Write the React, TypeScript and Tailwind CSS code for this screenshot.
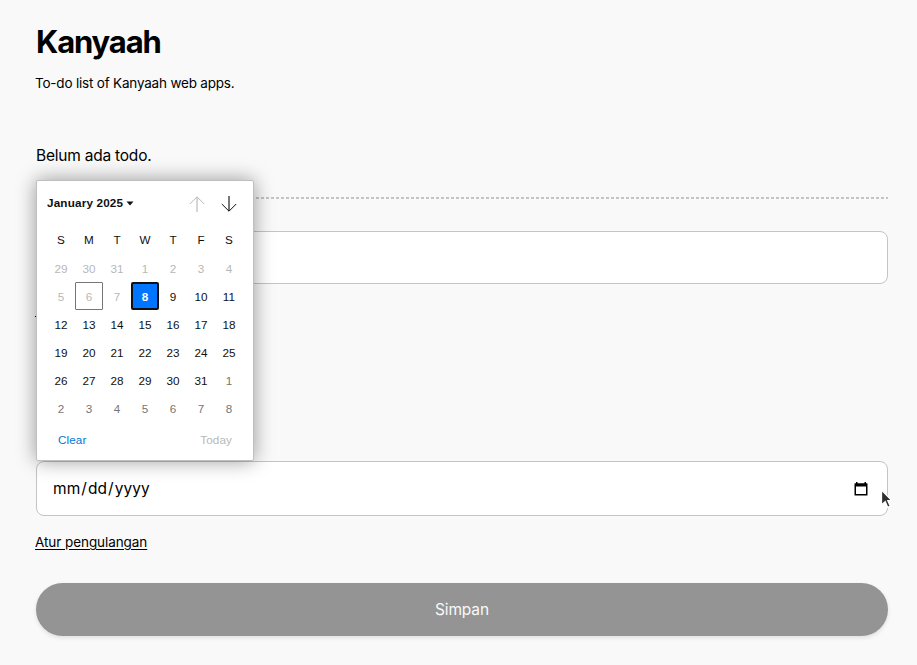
const WEEKDAYS = ["S", "M", "T", "W", "T", "F", "S"];
const DAYS = [
  29, 30, 31, 1, 2, 3, 4, 5, 6, 7, 8, 9, 10, 11, 12, 13, 14, 15, 16, 17, 18, 19, 20, 21, 22, 23, 24,
  25, 26, 27, 28, 29, 30, 31, 1, 2, 3, 4, 5, 6, 7, 8,
];

function dayClass(index: number) {
  if (index === 8) return "border border-[#767676] rounded-[1px] text-[#b8b8b8]";
  if (index === 10) return "border-2 border-[#101010] rounded-[2px] bg-[#0075ff] text-white font-bold";
  if (index < 10) return "text-[#b8b8b8]";
  if (index > 33) return "text-[#767676]";
  return "text-[#101010]";
}

function DatePicker() {
  return (
    <div className="absolute left-9 top-[180px] flex h-[281px] w-[218px] flex-col rounded-[2px] border border-[#bfbfbf] bg-white font-['Liberation_Sans',Arial,sans-serif] text-[11.7px] tracking-[0.1px] text-[#101010] shadow-[0_0_20px_rgba(0,0,0,0.4)]">
      <div className="flex h-[45px] items-center pl-[10px] pr-4">
        <span className="-mt-[2px] text-[11.7px] font-bold tracking-[0.18px]">January 2025</span>
        <svg className="-mt-px ml-[3px]" width="8" height="5" viewBox="0 0 8 5">
          <path d="M.5.5h7L4 4.5z" fill="#101010" />
        </svg>
        <div className="ml-auto flex gap-4">
          <svg width="16" height="16" viewBox="0 0 16 16" fill="none">
            <path d="M8 16V1" stroke="#d6d6d6" strokeWidth="2" />
            <path d="M.8 8 8 .8 15.200 8" stroke="#b8b8b8" />
          </svg>
          <svg width="16" height="16" viewBox="0 0 16 16" fill="none">
            <path d="M8 0V15" stroke="#777777" strokeWidth="2" />
            <path d="M.8 8 8 15.200 15.200 8" stroke="#101010" />
          </svg>
        </div>
      </div>
      <div className="grid grid-cols-[repeat(7,28px)] pl-[10px]">
        {WEEKDAYS.map((day, i) => (
          <div key={i} className="flex h-7 items-center justify-center pb-px">
            {day}
          </div>
        ))}
      </div>
      <div className="grid grid-cols-[repeat(7,28px)] pl-[10px]">
        {DAYS.map((day, i) => (
          <div key={i} className={`flex h-7 items-center justify-center ${dayClass(i)}`}>
            <span className="pt-[2px]">{day}</span>
          </div>
        ))}
      </div>
      <div className="flex h-[35px] items-center justify-between pl-[21px] pr-[21px] pt-px">
        <span className="text-[#0078d4]">Clear</span>
        <span className="text-[#b8b8b8]">Today</span>
      </div>
    </div>
  );
}

export default function App() {
  return (
    <main className="relative h-[665px] overflow-hidden bg-[#f9f9f9] pl-9 pr-[29px] font-['Inter',sans-serif] text-black">
      <h1 className="pt-[22px] text-[31px] font-bold leading-10">
        <span className="tracking-[-1.15px]">Kanyaah</span>
      </h1>
      <p className="-ml-px mt-[11px] text-[13.5px] leading-5 tracking-[-0.2px]">To-do list of Kanyaah web apps.</p>
      <p className="mt-[51px] text-[15.5px] leading-6 tracking-[-0.22px]">Belum ada todo.</p>
      <div className="mt-[29px] h-[2px] bg-[repeating-linear-gradient(to_right,#c4c4c4_0_3px,transparent_3px_5px)]" />
      <div className="mt-8 h-[53px] rounded-lg border border-[#c4c4c4] bg-white" />
      <div className="-ml-px mt-8 h-px w-8 bg-black" />
      <div className="mt-36 flex h-[55px] items-center justify-between rounded-lg border border-[#c4c4c4] bg-white px-4">
        <span className="text-[15.5px] tracking-[0.05px]">
          mm<span className="mx-px">/</span>dd<span className="mx-px">/</span>yyyy
        </span>
        <svg className="mr-[3px]" width="14" height="14" viewBox="0 0 14 14">
          <path
            fillRule="evenodd"
            d="M2 0h1.500v1.200h7V0H12v1.200h1q.5 0 .5.5V13q0 .5-.5.5H1q-.5 0-.5-.5V1.700q0-.5.5-.5h1zM2 4.500v7.600h10V4.500z"
          />
        </svg>
      </div>
      <p className="-ml-px mt-4 text-[13.5px] leading-5">
        <span className="tracking-[-0.07px] underline underline-offset-2">Atur pengulangan</span>
      </p>
      <button className="mt-[31px] flex h-[53px] w-full items-center justify-center rounded-full bg-[#949494] text-[15.5px] tracking-[-0.15px] text-[#f9f9f9] shadow-[0_2px_4px_rgba(0,0,0,0.1)]">
        Simpan
      </button>
      <DatePicker />
      <svg className="absolute left-[879px] top-[488px]" width="15" height="22" viewBox="0 0 15 22">
        <path
          d="M2.500 2v15l3.700-3.300 2.500 5.600 2.600-1.100-2.500-5.500H13z"
          fill="#2e2e2e"
          stroke="white"
          strokeWidth="1.300"
        />
      </svg>
    </main>
  );
}
